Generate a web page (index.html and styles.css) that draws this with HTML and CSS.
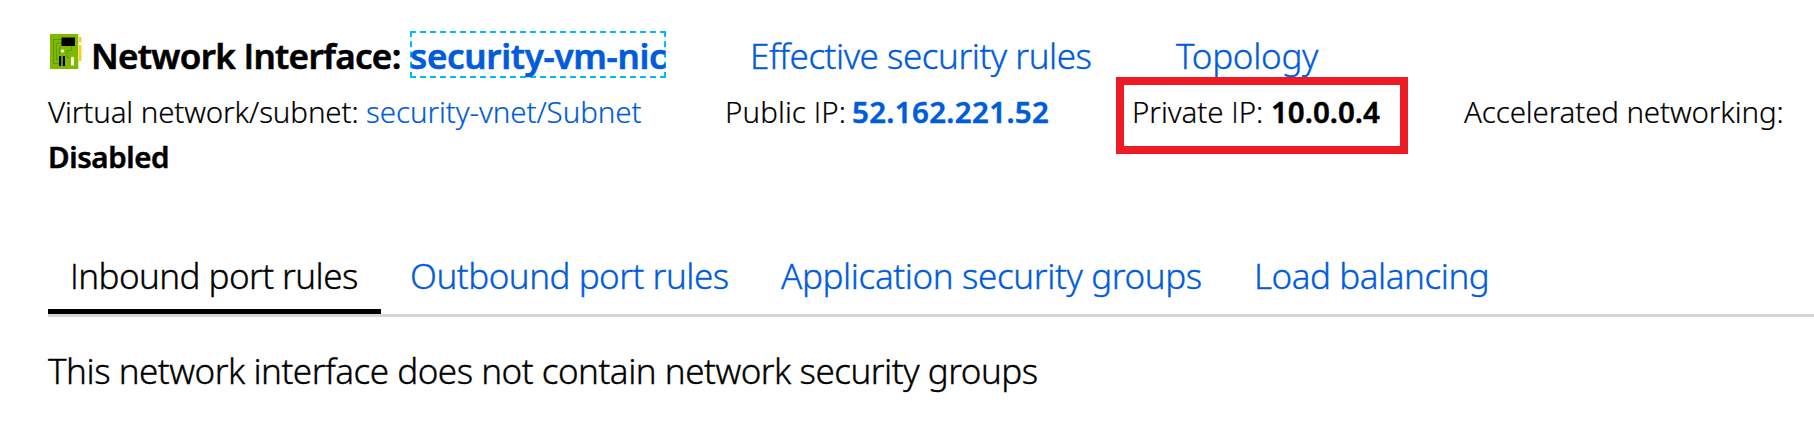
FILE: index.html
```html
<!DOCTYPE html>
<html lang="en">
<head>
<meta charset="utf-8">
<title>Network Interface</title>
<link rel="stylesheet" href="styles.css">
</head>
<body>
<main class="panel">
  <header class="title-row">
    <svg class="nic-icon" viewBox="0 0 32 35" width="32" height="35">
      <path fill="#7fba00" d="M0 0h28v35H0z"/>
      <path fill="#d4e8a8" d="M28 0h1v35h-1z"/>
      <path fill="#fcd116" d="M29 3h2.500v5.500H29zM29 11h2.500v16H29z"/>
      <path fill="none" stroke="#639500" stroke-width="1" d="M12 5.500H3.500v24h5M12 9H6.500v17h2.500M21.500 12v4.500H17v7h3M11 13H9.500v8"/>
      <path d="M11.500 3.500h13.500v8.500H11.500z"/>
      <circle cx="12.500" cy="17" r="1.700" fill="#e6f2cc"/>
      <path d="M9 22h2.200v10H9zM12.800 22H15v10h-2.200z"/>
      <path fill="#f2f8e5" d="M21 23h3v8.500h-3z"/>
    </svg>
    <h1 class="title">Network <span class="plain">I</span>nterface:</h1>
    <a class="nic-link">security-vm-nic</a>
    <a class="link effective">Effective security rules</a>
    <a class="link topology">Topology</a>
  </header>
  <section class="details">
    <span class="network-label">Virtual network/subnet:</span>
    <a class="link network-link">security-vnet/Subnet</a>
    <span class="public-label">Public <span class="plain">I</span>P:</span>
    <a class="link strong public-ip">52.162.221.52</a>
    <span class="private-label">Private <span class="plain">I</span>P:</span>
    <strong class="strong private-ip">10.0.0.4</strong>
    <span class="accel-label">Accelerated networking:</span>
    <strong class="strong accel-value">Disabled</strong>
  </section>
  <nav class="tabs">
    <a class="tab active"><span class="plain">I</span>nbound port rules</a>
    <a class="tab outbound">Outbound port rules</a>
    <a class="tab groups">Application security groups</a>
    <a class="tab balancing">Load balancing</a>
  </nav>
  <p class="message">This network interface does not contain network security groups</p>
  <div class="highlight"></div>
</main>
</body>
</html>
```
FILE: styles.css
```css
* { box-sizing: border-box; }
body {
  margin: 0;
  background: #fff;
  color: #000;
  font-family: "Noto Sans", "Open Sans", sans-serif;
  font-weight: 300;
  font-variant-ligatures: none;
  -webkit-text-stroke: 0.35px;
  overflow: hidden;
}
.plain { font-family: "Open Sans", sans-serif; }
.panel {
  position: relative;
  height: 439px;
  padding: 31px 0 0 48px;
}
.title-row {
  display: grid;
  grid-template-columns: 43px 319px 340px 426px 1fr;
  height: 58px;
  padding-top: 2px;
  font-size: 35px;
  line-height: 45px;
  white-space: nowrap;
}
.nic-icon { margin: 1px 0 0 2px; }
.title {
  margin: 0;
  font-size: 35px;
  font-weight: 600;
  letter-spacing: -0.69px;
  -webkit-text-stroke: 0.6px;
}
.link, .nic-link, .tab { color: #015cda; }
.nic-link {
  width: 256px;
  height: 47px;
  margin-top: -2px;
  border: 2px dashed #00bcf2;
  font-weight: 600;
  letter-spacing: -0.32px;
  text-indent: -2px;
  -webkit-text-stroke: 0.6px;
}
.effective { letter-spacing: -0.48px; }
.topology { letter-spacing: -0.3px; }
.details {
  display: grid;
  grid-template-columns: 318px 359px 127px 280px 139px 193px 1fr;
  font-size: 29.500px;
  line-height: 45px;
  white-space: nowrap;
  -webkit-text-stroke: 0.2px;
}
.strong { font-weight: 600; -webkit-text-stroke: 0.5px; }
.network-label { letter-spacing: -0.12px; }
.network-link { letter-spacing: -0.07px; }
.public-label { letter-spacing: 0.1px; }
.public-ip { letter-spacing: 0.31px; }
.private-label { letter-spacing: -0.03px; }
.private-ip { letter-spacing: 0; }
.accel-label { letter-spacing: -0.13px; }
.accel-value { grid-column: 1; letter-spacing: -0.4px; }
.tabs {
  display: grid;
  grid-template-columns: 333px 400px 473px 1fr;
  height: 64px;
  margin-top: 74px;
  border-bottom: 3px solid #d6d6d6;
  font-size: 35px;
  line-height: 45px;
  white-space: nowrap;
}
.active {
  padding-left: 22px;
  border-bottom: 5px solid #000;
  color: #000;
  letter-spacing: -0.57px;
}
.outbound { padding-left: 29px; letter-spacing: -0.49px; }
.groups { letter-spacing: -0.38px; }
.balancing { letter-spacing: -0.45px; }
.message {
  margin: 31px 0 0;
  font-size: 35px;
  line-height: 45px;
  letter-spacing: -0.49px;
}
.highlight {
  position: absolute;
  left: 1116px;
  top: 77px;
  width: 292px;
  height: 77px;
  border: 8px solid #ed1c24;
}
```
